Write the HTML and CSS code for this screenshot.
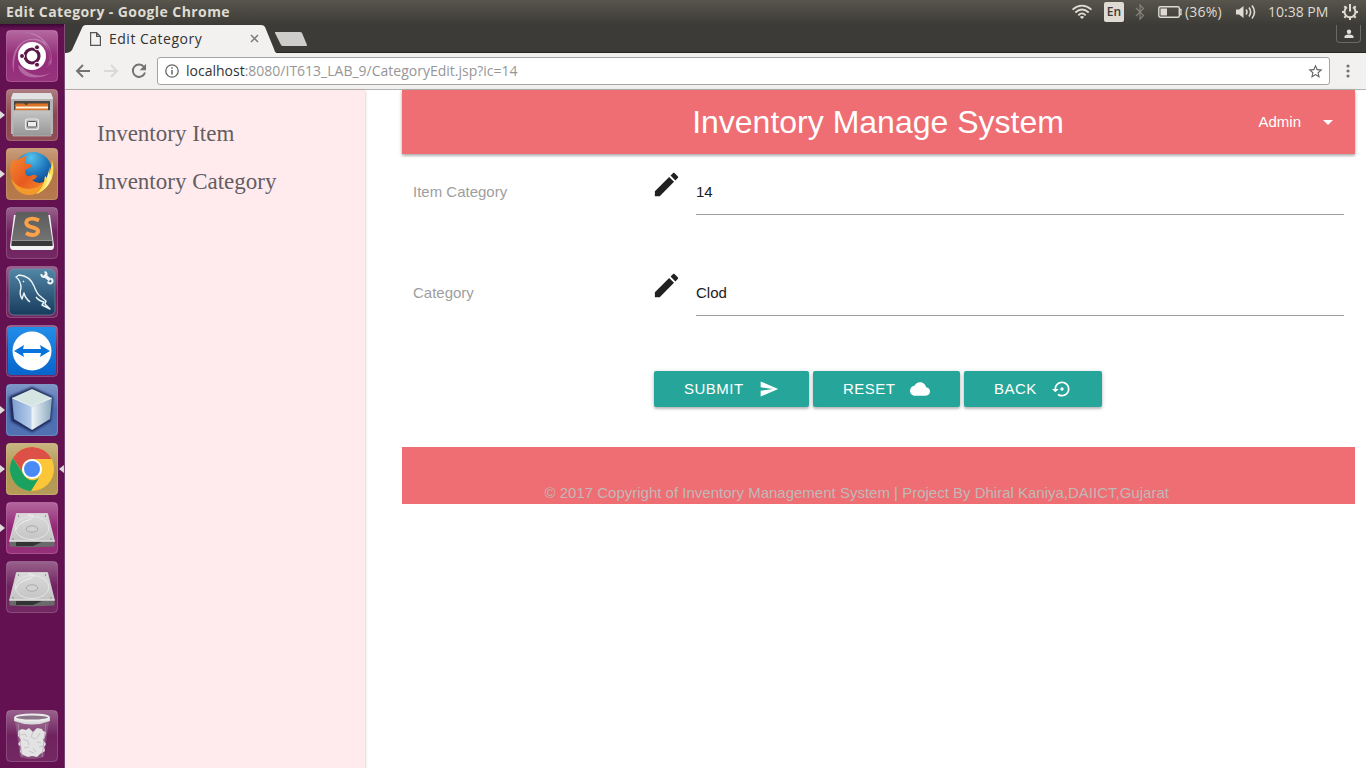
FILE: index.html
```html
<!DOCTYPE html>
<html lang="en">
<head>
<meta charset="utf-8">
<title>Edit Category</title>
<link rel="stylesheet" href="styles.css">
</head>
<body>
<header class="panel">
  <span class="panel-title">Edit Category - Google Chrome</span>
  <div class="indicators">
    <svg class="ind-wifi" width="22" height="16" viewBox="0 0 22 16" fill="none" stroke="#dfdbd2" stroke-width="1.7"><path d="M1.500 5.600Q11-2.200 20.500 5.600M4.300 8.500Q11 2.500 17.700 8.500M7.300 11.300Q11 7.500 14.700 11.300"/><path d="M8.800 12.900Q11 11.300 13.200 12.900L11 15z" fill="#dfdbd2" stroke="none"/></svg>
    <span class="ind-lang">En</span>
    <svg class="ind-bt" width="10" height="18" viewBox="0 0 10 18" fill="none" stroke="#85827a" stroke-width="1.200"><path d="M1 5l7.500 7.500L5 16V2l3.500 3.500L1 13"/></svg>
    <svg class="ind-bat" width="25" height="14" viewBox="0 0 25 14"><rect x=".8" y="1.800" width="20.500" height="10.500" rx="1.500" fill="none" stroke="#dfdbd2" stroke-width="1.400"/><path d="M2.500 3.500H9v7H2.500z" fill="#dfdbd2"/><path d="M22 4.500h1v5h-1" fill="none" stroke="#dfdbd2" stroke-width="1.300"/></svg>
    <span class="ind-pct">(36%)</span>
    <svg class="ind-vol" width="21" height="16" viewBox="0 0 21 16"><path d="M1 5.500h3L8.500 2v12L4 10.500H1z" fill="#dfdbd2"/><path d="M11 5.500q2 2.500 0 5M14 3.500q3.300 4.500 0 9M17 1.500q5 6.500 0 13" fill="none" stroke="#dfdbd2" stroke-width="1.600"/></svg>
    <span class="ind-time">10:38 PM</span>
    <svg class="ind-gear" width="18" height="18" viewBox="0 0 18 18" fill="none" stroke="#dfdbd2"><path d="M6 4.200a5.500 5.500 0 1 0 6 0" stroke-width="2"/><path d="M9 1v7.500" stroke-width="2"/><path d="M3.300 3.300l1.500 1.500M14.700 3.300l-1.500 1.500M1 9h2.500M14.500 9H17M3.300 14.700l1.500-1.500M14.700 14.700l-1.500-1.500M9 14.500V17" stroke-width="2"/></svg>
  </div>
</header>
<div class="desktop">
  <nav class="launcher">
    <svg width="0" height="0" class="defs">
      <defs>
        <linearGradient id="silver" x2="0" y2="1"><stop stop-color="#c4c4c4"/><stop offset="1" stop-color="#979797"/></linearGradient>
        <linearGradient id="disk" x2="0" y2="1"><stop stop-color="#dadada"/><stop offset="1" stop-color="#c4c4c4"/></linearGradient>
        <linearGradient id="gloss" x2="0" y2="1"><stop stop-color="#fff" stop-opacity=".34"/><stop offset=".5" stop-color="#fff" stop-opacity=".07"/><stop offset="1" stop-color="#fff" stop-opacity=".1"/></linearGradient>
        <linearGradient id="dark" x2="0" y2="1"><stop stop-color="#5c5c5c"/><stop offset="1" stop-color="#777"/></linearGradient>
        <linearGradient id="sea" x2="0" y2="1"><stop stop-color="#5286a5"/><stop offset="1" stop-color="#173b5d"/></linearGradient>
        <linearGradient id="viewer" x2="0" y2="1"><stop stop-color="#228de9"/><stop offset="1" stop-color="#0765cb"/></linearGradient>
        <linearGradient id="fox" x2="1" y2="1"><stop stop-color="#f68a30"/><stop offset=".5" stop-color="#e75a20"/><stop offset="1" stop-color="#f5962a"/></linearGradient>
        <radialGradient id="globe" cx=".45" cy=".15" r=".75"><stop stop-color="#55c3ea"/><stop offset=".6" stop-color="#1c74bb"/><stop offset="1" stop-color="#153f84"/></radialGradient>
        <linearGradient id="cubeside"><stop stop-color="#7c9ecf"/><stop offset="1" stop-color="#b9d0ec"/></linearGradient>
        <linearGradient id="cuberight"><stop stop-color="#eef5f8"/><stop offset="1" stop-color="#8aa8c0"/></linearGradient>
        <filter id="halo" x="-20%" y="-20%" width="140%" height="140%"><feGaussianBlur stdDeviation="1.200"/></filter>
        <g id="frame"><rect x=".5" y=".5" width="51" height="51" rx="4" fill="url(#gloss)" stroke="#fff" stroke-opacity=".2"/></g>
        <g id="drive">
          <path d="M10.500 11.500h31l7 28H3.500z" fill="url(#disk)" stroke="#e4e4e4" stroke-width=".7"/>
          <ellipse cx="26" cy="26" rx="17" ry="11.500" fill="none" stroke="#e6e6e6"/>
          <path d="M22 12.500q9 1 2 5-12 3-14 10" fill="none" stroke="#efefef" stroke-width="1"/>
          <path d="M3.500 39.500h45v5q-22 1.500-45 0z" fill="#6a6a6a"/><path d="M10 40h26l-9 4H10z" fill="#333"/><path d="M3.500 39h45" stroke="#eee"/>
          <ellipse cx="26" cy="27" rx="5.700" ry="3.200" fill="#d2d2d2" stroke="#aaa"/><circle cx="12.500" cy="14" r=".7" fill="#777"/><circle cx="39.500" cy="14" r=".7" fill="#777"/><circle cx="7" cy="37" r=".7" fill="#777"/><circle cx="45" cy="37" r=".7" fill="#777"/>
        </g>
      </defs>
    </svg>
    <div class="slot"><svg class="tile" viewBox="0 0 52 52"><rect width="52" height="52" rx="4" fill="#8c1c6f"/><use href="#frame"/><path d="M8 44C2 20 16 7 31 9c13 3 18 18 10 29C47 26 42 13 30 10 15 8 7 20 8 44zM12 35c1 14 24 17 36 5-8 8-24 7-31-2zM45 36C49 16 36 3 18 2c16 3 26 11 25 27z" fill="#fff" opacity=".28"/><circle cx="26" cy="26" r="14" fill="#fff"/><circle cx="26" cy="26" r="7" fill="none" stroke="#5b174a" stroke-width="3.200"/><g fill="#5b174a" stroke="#fff"><circle cx="16" cy="26" r="2.500"/><circle cx="31" cy="17.300" r="2.500"/><circle cx="31" cy="34.700" r="2.500"/></g></svg></div>
    <div class="slot run"><svg class="tile" viewBox="0 0 52 52"><rect width="52" height="52" rx="4" fill="#843943"/><use href="#frame"/><path d="M7 4h38l2 5v36H5V9z" fill="#b5b5b5"/><path d="M7 4h38l2 6H5z" fill="#e2e2e2"/><path d="M8 12h36v12H8z" fill="#4a4642"/><path d="M9 16l1-1.500h8l2 1.500h1l1-1.500h20V22H9z" fill="#dd7424"/><path d="M10 17.500h32v2H10z" fill="#fff3dd"/><path d="M7 21.500h38V47H7z" fill="url(#silver)" stroke="#b9b9b9" stroke-width=".7"/><rect x="19.500" y="30" width="13" height="10.500" rx="2" fill="#bcbcbc" stroke="#e8e8e8" stroke-width="1.200"/><rect x="21.500" y="32.500" width="9" height="5.500" rx="1" fill="#eee" stroke="#555"/></svg></div>
    <div class="slot run"><svg class="tile" viewBox="0 0 52 52"><rect width="52" height="52" rx="4" fill="#ae6b39"/><use href="#frame"/><circle cx="27" cy="23" r="19" fill="url(#globe)"/><path d="M4.500 26Q3 16 7.500 11q1 1 1.500 3 5-5 12-6-3 4-2 8h5q2 1 1 3l-6 3q0 5 3 6 2 .5 4-1 3-1 5 1-1 3-5 4 7 6 15 0-5 11-15 15-17-2-21.500-21z" fill="url(#fox)"/><path d="M46 12q3 13-3 22-7 12-19 13Q9 47 5 30q6 11 18 11 20-1 23-29z" fill="#f39a2c"/><path d="M46 12q4 14-3 24-6 8-13 10 8-6 9-18l2 2q5-8 5-18z" fill="#fbdf55"/><path d="M44 19l-1 7q3 0 2 4-2 8-8 12 5-7 4-13" fill="#fff29c"/></svg></div>
    <div class="slot"><svg class="tile" viewBox="0 0 52 52"><use href="#frame"/><path d="M8 8h36l4 31q0 4-3 4H7q-3 0-3-4z" fill="#f2f2f2"/><path d="M10 6q0-1 2-1h28q2 0 2 1l4.500 28v5h-41v-5z" fill="url(#dark)"/><path d="M6 34h40l.5 5h-41z" fill="#393939"/><path d="M6 33.500h40" stroke="#929292"/><path d="M33 13.500Q26 10 21.500 13q-4 5 5 7.300 9 2.400 3.500 7-4.500 2-10-1.300" fill="none" stroke="#fba148" stroke-width="3.900"/></svg></div>
    <div class="slot"><svg class="tile" viewBox="0 0 52 52"><use href="#frame"/><rect x="3" y="3" width="46" height="46" rx="5" fill="url(#sea)" stroke="#7799ac" stroke-width=".6"/><path d="M24 36q-5-4-6-9l-2 6q-3-5-1-11 0-7-5-11l3-2q11 1 15 11 3 8 6 10l6 5-1 3 5 5-8-4 2-3q-5-1-8-5M17 15l1 1" fill="none" stroke="#e8f4f8" stroke-width="1.400" stroke-linejoin="round"/><path d="M38 9l6 5" stroke="#f0f5f7" stroke-width="3.500"/><path d="M35.500 8a2.500 2.500 0 1 0 3-2M42 15.500a2.300 2.300 0 1 0 2.500-2.700" fill="none" stroke="#f0f5f7" stroke-width="2"/></svg></div>
    <div class="slot"><svg class="tile" viewBox="0 0 52 52"><use href="#frame"/><rect x="2" y="2" width="48" height="48" rx="3" fill="url(#viewer)"/><circle cx="26" cy="26" r="19.500" fill="#fff"/><path d="M8 26l10-6-1 4h18l-1-4 10 6-10 6 1-4H17l1 4z" fill="#0874db"/></svg></div>
    <div class="slot run"><svg class="tile" viewBox="0 0 52 52"><rect width="52" height="52" rx="4" fill="#3e62aa"/><use href="#frame"/><path d="M26 5l19 9-2 22-17 10L7 36 5 14z" fill="#202b5d" stroke="#202b5d" stroke-width="4" stroke-linejoin="round" filter="url(#halo)"/><path d="M6 14l20 9v23L8 35z" fill="url(#cubeside)"/><path d="M26 23l20-9-2 21-18 11z" fill="url(#cuberight)"/><path d="M26 5l20 9-20 9-20-9z" fill="#d5e6e2"/><path d="M6.500 14L26 22.500 45.500 14M26 22v23" fill="none" stroke="#e7f0f4" stroke-width="1.100"/></svg></div>
    <div class="slot run active"><svg class="tile" viewBox="0 0 52 52"><rect width="52" height="52" rx="4" fill="#ad9044"/><use href="#frame"/><circle cx="26" cy="26" r="22" fill="#fbc638"/><path d="M6.900 15A22 22 0 0 1 45.600 16H26a10 10 0 0 0-9.500 13z" fill="#dc5048"/><path d="M6.900 15A22 22 0 0 0 25 48l8-13a10 10 0 0 1-15.500-4z" fill="#1ba261"/><circle cx="26" cy="26" r="10" fill="#fff"/><circle cx="26" cy="26" r="8" fill="#4a8af4"/></svg></div>
    <div class="slot run"><svg class="tile" viewBox="0 0 52 52"><rect width="52" height="52" rx="4" fill="#8b186b"/><use href="#frame"/><use href="#drive"/></svg></div>
    <div class="slot"><svg class="tile" viewBox="0 0 52 52"><use href="#frame"/><use href="#drive"/></svg></div>
    <div class="slot trash"><svg class="tile" viewBox="0 0 52 52"><use href="#frame"/><path d="M9 11h34l-5 36q-12 4-24 0z" fill="#c5b6c4" opacity=".25"/><path d="M12 21l4-2 4 1 3-2 4 4 4-4 5 1 1 2 3 1-1 5-2 3 3 4-2 3 1 4-5 3-3 3-5-1-4 1-5-2-3-3 1-5-3-3 3-4-3-4z" fill="#e3e3e3"/><path d="M15 25l4-1 2 3m6-5l-2 5 5 2m4-6l-3 5m-14 1l5 2 1 4m8-3l4 1m-17 5l5-1m4 1l3 4m3-5l4-1m-9 7l-5-2" fill="none" stroke="#c6c6c6"/><path d="M12 14l4 33M40 14l-4 33" stroke="#b997b4" stroke-width=".7"/><path d="M8 8v3q18 7 36 0V8z" fill="#ddd"/><ellipse cx="26" cy="7.500" rx="17" ry="3" fill="#8d7589" stroke="#ececec" stroke-width="1.800"/></svg></div>
  </nav>
  <main class="browser">
    <div class="tabstrip">
      <div class="tab">
        <svg class="tab-shape" width="211" height="29" viewBox="0 0 211 29"><path d="M0 29q5 0 7-3L17 4q1-3 4-3h175q3 0 4 2l9 22q1 4 3 4z" fill="#f2f1f0"/></svg>
        <svg class="tab-doc" width="11" height="14" viewBox="0 0 11 14" fill="none" stroke="#555" stroke-width="1.200"><path d="M.6.6h6l3.800 3.800v9H.6zM6.600.6v3.800h3.800"/></svg>
        <span class="tab-title">Edit Category</span>
        <svg class="tab-x" width="9" height="9" viewBox="0 0 9 9"><path d="M1 1l7 7M8 1L1 8" stroke="#7b7a79" stroke-width="1.500"/></svg>
      </div>
      <svg class="newtab" width="34" height="17" viewBox="0 0 34 17"><path d="M1 1h25q1.500 0 2 1l5 12q.4 1-1 1H9Q7.500 15 7 14L1 2z" fill="#cfcdcb"/></svg>
      <div class="profile"><svg width="10" height="10" viewBox="0 0 10 10" fill="#e1dfdc"><circle cx="5" cy="2.700" r="2.200"/><path d="M.5 9V7.500Q1 5.500 5 5.500t4.500 2V9z"/></svg></div>
    </div>
    <div class="toolbar">
      <svg class="back" width="16" height="16" viewBox="0 0 16 16" fill="none" stroke="#737373" stroke-width="1.900"><path d="M15 8H2.500M8 2L2 8l6 6"/></svg>
      <svg class="fwd" width="16" height="16" viewBox="0 0 16 16" fill="none" stroke="#dad9d8" stroke-width="1.900"><path d="M1 8h12.500M8 2l6 6-6 6"/></svg>
      <svg class="reload" width="16" height="16" viewBox="0 0 16 16"><path d="M13 4A6.200 6.200 0 1 0 14 9.500" fill="none" stroke="#737373" stroke-width="1.900"/><path d="M15 .8v6.400H8.700z" fill="#737373"/></svg>
      <div class="omnibox">
        <svg width="14" height="14" viewBox="0 0 14 14"><circle cx="7" cy="7" r="6.200" fill="none" stroke="#666" stroke-width="1.300"/><path d="M7 6v4.500M7 3.200v1.600" stroke="#666" stroke-width="1.500"/></svg>
        <span class="url"><b>localhost</b>:8080/IT613_LAB_9/CategoryEdit.jsp?ic=14</span>
        <svg class="star" width="17" height="17" viewBox="0 0 24 24" fill="#666"><path d="M22 9.240l-7.190-.62L12 2 9.190 8.630 2 9.240l5.460 4.730L5.820 21 12 17.270 18.180 21l-1.630-7.030L22 9.240zM12 15.400l-3.760 2.270 1-4.280-3.320-2.880 4.380-.38L12 6.100l1.710 4.040 4.380.38-3.320 2.880 1 4.280L12 15.400z"/></svg>
      </div>
      <svg class="menu" width="4" height="14" viewBox="0 0 4 14" fill="#737373"><circle cx="2" cy="2" r="1.600"/><circle cx="2" cy="7" r="1.600"/><circle cx="2" cy="12" r="1.600"/></svg>
    </div>
    <div class="page">
      <aside class="sidenav"><a>Inventory Item</a><a>Inventory Category</a></aside>
      <section class="content">
        <div class="navbar">
          <h1>Inventory Manage System</h1>
          <div class="account"><span>Admin</span><svg width="10" height="5" viewBox="0 0 10 5"><path d="M0 0h10L5 5z" fill="#fff"/></svg></div>
        </div>
        <div class="field">
          <label>Item Category</label>
          <svg class="edit" width="31" height="31" viewBox="0 0 24 24"><path d="M3 17.250V21h3.750L17.810 9.940l-3.750-3.750L3 17.250zM20.710 7.040c.39-.39.39-1.020 0-1.410l-2.340-2.340c-.39-.39-1.020-.39-1.410 0l-1.830 1.830 3.750 3.750 1.830-1.830z"/></svg>
          <div class="input">14</div>
        </div>
        <div class="field">
          <label>Category</label>
          <svg class="edit" width="31" height="31" viewBox="0 0 24 24"><path d="M3 17.250V21h3.750L17.810 9.940l-3.750-3.750L3 17.250zM20.710 7.040c.39-.39.39-1.020 0-1.410l-2.340-2.340c-.39-.39-1.020-.39-1.410 0l-1.830 1.830 3.750 3.750 1.830-1.830z"/></svg>
          <div class="input">Clod</div>
        </div>
        <div class="actions">
          <button class="btn submit"><span>SUBMIT</span><svg width="20" height="20" viewBox="0 0 24 24"><path d="M2.010 21L23 12 2.010 3 2 10l15 2-15 2z"/></svg></button>
          <button class="btn reset"><span>RESET</span><svg width="20" height="20" viewBox="0 0 24 24"><path d="M19.350 10.040C18.670 6.590 15.640 4 12 4 9.110 4 6.600 5.640 5.350 8.040 2.340 8.360 0 10.910 0 14c0 3.310 2.690 6 6 6h13c2.760 0 5-2.240 5-5 0-2.640-2.050-4.780-4.650-4.960z"/></svg></button>
          <button class="btn prev"><span>BACK</span><svg width="20" height="20" viewBox="0 0 24 24"><path d="M14 12c0-1.100-.9-2-2-2s-2 .9-2 2 .9 2 2 2 2-.9 2-2zm-2-9c-4.970 0-9 4.030-9 9H0l4 4 4-4H5c0-3.870 3.130-7 7-7s7 3.130 7 7-3.130 7-7 7c-1.510 0-2.910-.49-4.060-1.300l-1.420 1.440C8.040 20.300 9.940 21 12 21c4.970 0 9-4.030 9-9s-4.030-9-9-9z"/></svg></button>
        </div>
        <footer class="footer">© 2017 Copyright of Inventory Management System | Project By Dhiral Kaniya,DAIICT,Gujarat</footer>
      </section>
    </div>
  </main>
</div>
</body>
</html>
```
FILE: styles.css
```css
* { box-sizing: border-box; }
body { margin: 0; width: 1366px; height: 768px; overflow: hidden; display: flex; flex-direction: column; font-family: "Liberation Sans", sans-serif; font-size: 15px; }
svg { display: block; flex: none; }
.panel { height: 24px; flex: none; display: flex; align-items: center; justify-content: space-between; padding: 0 7px 0 6px; background: linear-gradient(#57554c, #3d3c37); color: #dfdbd2; font: 14px "Open Sans", sans-serif; white-space: nowrap; }
.panel-title { font-weight: 700; font-size: 14px; letter-spacing: .42px; padding-bottom: 2px; }
.indicators { display: flex; align-items: center; }
.ind-lang { width: 20px; height: 20px; margin-left: 11px; border-radius: 2px; background: #dfdbd2; color: #3d3c37; font-size: 12px; line-height: 20px; text-align: center; font-weight: 600; }
.ind-bt { margin-left: 11px; }
.ind-bat { margin-left: 13px; }
.ind-pct { width: 39px; margin-left: 2px; letter-spacing: .2px; padding-bottom: 2px; }
.ind-vol { margin-left: 11px; }
.ind-time { width: 62px; margin-left: 12px; letter-spacing: 0; padding-bottom: 2px; }
.ind-gear { margin-left: 11px; }
.desktop { flex: 1; min-height: 0; display: flex; }
.launcher { width: 65px; flex: none; display: flex; flex-direction: column; gap: 7px; padding: 6px 0 6px; background: linear-gradient(#3a0833, #641152 5px, #641152); border-right: 1px solid #84507a; }
.defs { position: absolute; }
.slot { height: 52px; display: flex; align-items: center; justify-content: space-between; flex: none; }
.slot::before, .slot::after { content: ""; width: 6px; border: 4px solid transparent; border-width: 4px 0 4px 5px; }
.slot.run::before { border-left-color: #ddd; }
.slot.active::after { border-width: 4px 5px 4px 0; border-right-color: #ddd; }
.tile { width: 52px; height: 52px; }
.trash { margin-top: auto; }
.browser { flex: 1; min-width: 0; display: flex; flex-direction: column; background: #fff; }
.tabstrip { height: 29px; flex: none; display: flex; background: #3c3b37; border-bottom: 1px solid #292825; }
.tab { width: 211px; height: 29px; display: grid; grid-template-columns: 25px 19px 1fr 9px 17px; align-items: center; }
.tab > * { grid-row: 1; }
.tab-shape { grid-column: 1 / -1; width: 211px; overflow: visible; }
.tab-doc { grid-column: 2; }
.tab-title { grid-column: 3; font: 14px "Open Sans", sans-serif; letter-spacing: .5px; color: #333; white-space: nowrap; }
.tab-x { grid-column: 4; }
.newtab { margin: 7px 0 0 -2px; }
.profile { width: 25px; height: 18px; margin: 1px 5px 0 auto; border: 1px solid #6a6964; border-top: 0; border-radius: 0 0 4px 4px; display: grid; place-items: center; }
.toolbar { height: 37px; flex: none; display: flex; align-items: center; padding: 0 16px 0 10px; background: #f2f1f0; border-bottom: 1px solid #b6b4b2; }
.fwd { margin-left: 12px; }
.reload { margin-left: 12px; }
.omnibox { width: 1173px; height: 28px; margin-left: 10px; display: flex; align-items: center; border: 1px solid #a5a4a3; border-radius: 3px; background: #fff; padding: 0 5px 0 7px; }
.url { margin-left: 7px; padding-bottom: 2px; color: #969696; font: 14px "Open Sans", sans-serif; white-space: nowrap; }
.url b { color: #333; font-weight: 400; }
.star { margin-left: auto; }
.menu { margin-left: auto; }
.page { flex: 1; min-height: 0; display: flex; }
.sidenav { width: 300px; flex: none; background: #ffebee; box-shadow: 0 1px 3px rgba(0,0,0,.28); padding: 20px 32px; display: flex; flex-direction: column; font: 23px/48px "Liberation Serif", serif; color: #645d60; }
.content { width: 953px; margin-left: 37px; }
.navbar { height: 64px; display: grid; grid-template-columns: 1fr; align-items: center; background: #ee6e73; color: #fff; box-shadow: 0 2px 2px rgba(0,0,0,.18), 0 1px 4px rgba(0,0,0,.22); }
.navbar > * { grid-area: 1 / 1; }
h1 { margin: 0; padding-right: 1px; font-size: 32px; line-height: 64px; font-weight: 400; text-align: center; }
.account { justify-self: end; display: flex; align-items: center; gap: 22px; margin-right: 22px; }
.account span { padding-bottom: 2px; }
.field { display: flex; height: 46px; margin: 15px 11px 40px; line-height: 46px; }
.field + .field { margin-top: 55px; }
.field label { width: 238px; color: #9e9e9e; }
.edit { fill: #212121; }
.input { flex: 1; margin-left: 14px; border-bottom: 1px solid #9e9e9e; color: #212121; }
.actions { display: flex; gap: 4px; padding-left: 252px; margin-top: 55px; }
.btn { height: 36px; border: 0; border-radius: 2px; padding: 0 30px; display: flex; align-items: center; justify-content: space-between; background: #26a69a; color: #fff; font: 15px "Liberation Sans", sans-serif; letter-spacing: .5px; box-shadow: 0 2px 2px rgba(0,0,0,.14), 0 1px 4px rgba(0,0,0,.22); }
.btn span { padding-bottom: 2px; }
.btn svg { fill: #fff; }
.submit { width: 155px; }
.reset { width: 147px; }
.prev { width: 138px; }
.footer { height: 57px; margin-top: 40px; padding: 37px 0 0 142.500px; line-height: 18px; background: #ee6e73; color: #c2b8b7; white-space: nowrap; }
```
